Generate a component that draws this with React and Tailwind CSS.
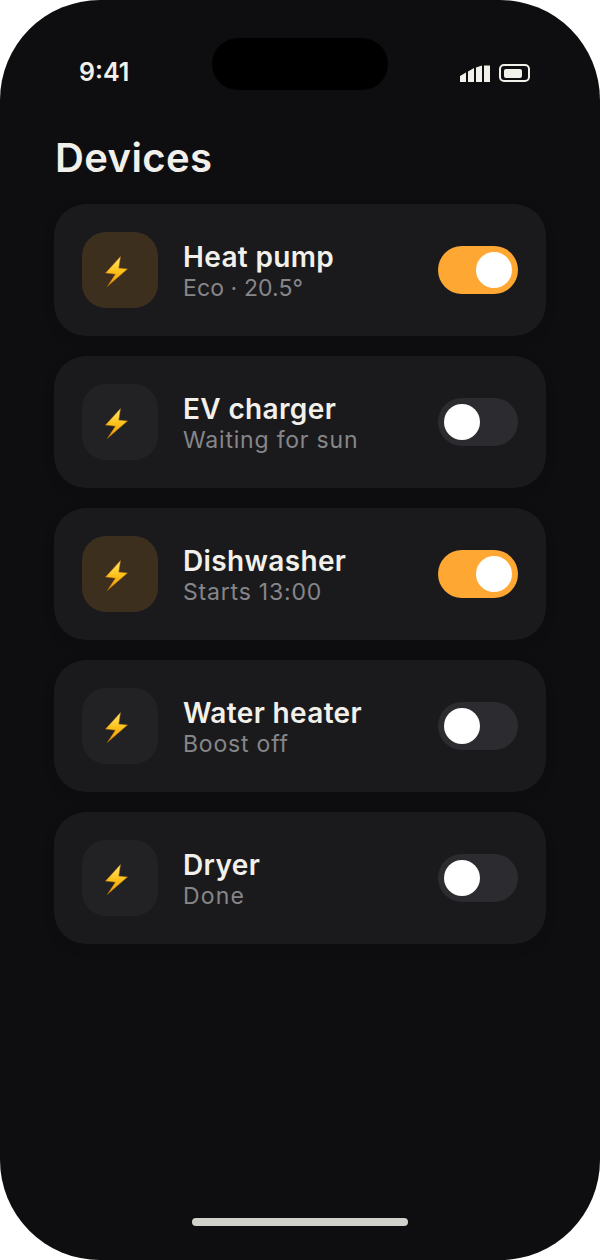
const font = { fontFamily: '"Inter", "Noto Sans", sans-serif' };

function Bolt() {
  return (
    <svg className="mt-[3px] mr-[7px]" width="23" height="31" viewBox="0 0 23 31" aria-hidden="true">
      <defs>
        <linearGradient id="boltFill" x1="0.5" y1="0" x2="0.5" y2="1">
          <stop offset="0" stopColor="#ffe978" />
          <stop offset="0.5" stopColor="#fcc21b" />
          <stop offset="1" stopColor="#ef9410" />
        </linearGradient>
      </defs>
      <path d="M15.500 0.500 0.500 17l9.800 1.200L2.300 30.500 22.500 13l-8.700-0.900z" fill="url(#boltFill)" stroke="#a86a0c" strokeWidth="0.5" strokeLinejoin="round" />
    </svg>
  );
}

function Device({ name, status, on, track }) {
  return (
    <div className="flex h-[132px] items-center rounded-[32px] bg-[#1a1a1c] px-7 shadow-[0_4px_12px_rgba(0,0,0,0.12)]">
      <div className={`flex h-[76px] w-[76px] shrink-0 items-center justify-center rounded-[24px] ${on ? "bg-[#3c2f1e]" : "bg-[#222225]"}`}>
        <Bolt />
      </div>
      <div className="ml-[25px] flex min-w-0 flex-1 flex-col pt-[3px]">
        <div className="text-[28px] leading-[32px] font-semibold tracking-[0.35px] text-[#f2f0eb]">{name}</div>
        <div className={`text-[23px] leading-[30px] font-normal text-[#86868a] ${track}`}>{status}</div>
      </div>
      <div className={`flex h-12 w-20 shrink-0 items-center rounded-full p-1.5 ${on ? "justify-end bg-[#ffa733]" : "justify-start bg-[#2c2c30]"}`}>
        <div className="h-9 w-9 rounded-full bg-white" />
      </div>
    </div>
  );
}

export default function App() {
  const devices = [
    { name: "Heat pump", status: "Eco · 20.5°", on: true, track: "tracking-[0.1px]" },
    { name: "EV charger", status: "Waiting for sun", on: false, track: "tracking-[0.8px]" },
    { name: "Dishwasher", status: "Starts 13:00", on: true, track: "tracking-[0.8px]" },
    { name: "Water heater", status: "Boost off", on: false, track: "tracking-[0.8px]" },
    { name: "Dryer", status: "Done", on: false, track: "tracking-[1.2px]" },
  ];
  return (
    <div className="h-[1260px] w-[600px] bg-white" style={font}>
      <div className="relative flex h-full w-full flex-col overflow-hidden rounded-[100px] bg-[#0e0e10] px-[54px]">
        <div className="absolute top-[38px] left-[212px] h-[52px] w-[176px] rounded-[26px] bg-black" />
        <div className="flex h-[145px] shrink-0 items-start justify-between pt-[56px] pr-4 pl-[25px]">
          <span className="text-[25px] leading-[32px] font-semibold text-[#f2f0eb]">9:41</span>
          <div className="mt-[8px] flex items-center gap-[9px]">
            <svg width="30" height="17" viewBox="0 0 30 17" fill="#f2f0eb" aria-hidden="true">
              <path d="M0 11 6 7.500V17H0zM8 6.500 14 3V17H8zM16 2.500 22 0.500V17h-6zM24 0.500h6V17h-6z" />
            </svg>
            <div className="flex h-[18px] w-[31px] items-center rounded-[5px] border-2 border-[#f2f0eb] px-[3px]">
              <div className="h-[9px] w-[18px] rounded-[2px] bg-[#f2f0eb]" />
            </div>
          </div>
        </div>
        <h1 className="ml-px text-[40px] leading-[26px] font-semibold tracking-[0.4px] text-[#f2f0eb]">Devices</h1>
        <div className="mt-[33px] flex flex-col gap-5">
          {devices.map((d) => (
            <Device key={d.name} {...d} />
          ))}
        </div>
        <div className="absolute bottom-[34px] left-[192px] h-2 w-[216px] rounded-full bg-[#d2d2cc]" />
      </div>
    </div>
  );
}
